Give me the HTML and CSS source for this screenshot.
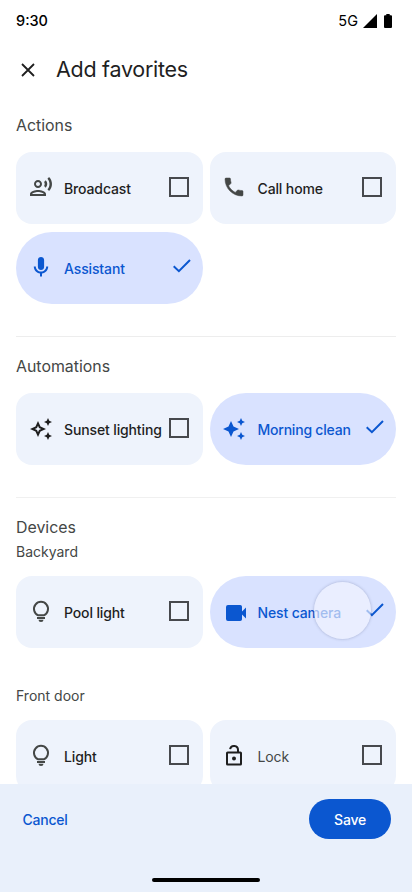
FILE: index.html
```
<!DOCTYPE html>
<html lang="en">
<head>
<meta charset="utf-8">
<title>Add favorites</title>
<link rel="stylesheet" href="styles.css">
</head>
<body>
<svg class="defs" aria-hidden="true">
  <symbol id="voice" viewBox="0 0 24 24"><path d="M9 13c2.21 0 4-1.79 4-4s-1.79-4-4-4-4 1.79-4 4 1.79 4 4 4zm0-6c1.1 0 2 .9 2 2s-.9 2-2 2-2-.9-2-2 .9-2 2-2zm0 8c-2.67 0-8 1.34-8 4v2h16v-2c0-2.66-5.33-4-8-4zm-6 4c.22-.72 3.31-2 6-2 2.7 0 5.8 1.29 6 2H3zM15.08 7.05c.84 1.18.84 2.71 0 3.89l1.68 1.69c2.02-2.02 2.02-5.07 0-7.27l-1.68 1.69zM20.07 2l-1.63 1.63c2.77 3.02 2.77 7.56 0 10.74L20.07 16c3.9-3.89 3.91-9.95 0-14z"/></symbol>
  <symbol id="call" viewBox="0 0 24 24"><path d="M6.62 10.79c1.44 2.83 3.76 5.14 6.59 6.59l2.2-2.2c.27-.27.67-.36 1.02-.24 1.12.37 2.33.57 3.57.57.55 0 1 .45 1 1V20c0 .55-.45 1-1 1-9.39 0-17-7.61-17-17 0-.55.45-1 1-1h3.5c.55 0 1 .45 1 1 0 1.25.2 2.45.57 3.57.11.35.03.74-.25 1.02l-2.2 2.2z" stroke="currentColor" stroke-width=".5"/></symbol>
  <symbol id="mic" viewBox="0 0 24 24"><path d="M12 15c1.76 0 3.1-1.34 3.1-3.1V5c0-1.76-1.34-3-3.1-3S8.900 3.240 8.900 5v6.900c0 1.760 1.340 3.100 3.100 3.100zM17.200 11.500c0 2.860-2.340 5.100-5.200 5.100s-5.200-2.240-5.200-5.100H4.800c0 3.630 2.710 6.530 6.200 7V21.500h2v-3c3.490-.47 6.200-3.370 6.200-7h-2z"/></symbol>
  <symbol id="sparkle" viewBox="0 0 24 24"><path d="M19 9l1.25-2.75L23 5l-2.75-1.25L19 1l-1.25 2.75L15 5l2.75 1.25L19 9zM19 15l-1.25 2.75L15 19l2.75 1.25L19 23l1.25-2.75L23 19l-2.75-1.25L19 15zM11.5 9.5L9 4 6.5 9.5 1 12l5.5 2.5L9 20l2.5-5.5L17 12l-5.5-2.5z"/></symbol>
  <symbol id="sparkle-outline" viewBox="0 0 24 24"><path fill-rule="evenodd" d="M19 9l1.25-2.75L23 5l-2.75-1.25L19 1l-1.25 2.75L15 5l2.75 1.25L19 9zM19 15l-1.25 2.75L15 19l2.75 1.25L19 23l1.25-2.75L23 19l-2.75-1.25L19 15zM11.5 9.500L9 4 6.500 9.500 1 12l5.500 2.500L9 20l2.500-5.500L17 12l-5.500-2.500zM9.990 12.990L9 15.170l-.990-2.180L5.830 12l2.180-.990L9 8.830l.990 2.180L12.170 12l-2.180.990z"/></symbol>
  <symbol id="bulb" viewBox="0 0 24 24"><path fill="none" stroke="currentColor" stroke-width="2" d="M9.300 16.300a7 7 0 1 1 5.400 0zM8 19h8"/><path d="M9.500 20.800h5a2.500 2.200 0 0 1-5 0z"/></symbol>
  <symbol id="camera" viewBox="0 0 24 24"><path d="M4 4h12.200a1.800 1.800 0 0 1 1.800 1.800v4.700l4-4v11l-4-4v4.700a1.800 1.800 0 0 1-1.800 1.800H4a2 2 0 0 1-2-2V6a2 2 0 0 1 2-2z"/></symbol>
  <symbol id="lock" viewBox="0 0 24 24"><path fill="none" stroke="currentColor" stroke-width="2" d="M8.100 6.100a4 4 0 0 1 7.900 1v2.400M5.600 9.500h12.800a.6.6 0 0 1 .6.6v10.800a.6.6 0 0 1-.6.6H5.600a.6.6 0 0 1-.6-.6V10.100a.6.6 0 0 1 .6-.6z"/><circle cx="12" cy="15.500" r="2"/></symbol>
  <symbol id="check" viewBox="0 0 20 16"><path fill="none" stroke="currentColor" stroke-width="2" d="M1.700 8.200l5.200 5L18 2"/></symbol>
</svg>
<div class="screen">
  <header class="status">
    <span class="clock">9:30</span>
    <span class="network">5G</span>
    <svg class="signal" viewBox="0 0 14 14"><path d="M14 0v14H0z"/></svg>
    <svg class="battery" viewBox="0 0 8 14"><path d="M2.300 0h3.400v1.200H7a1 1 0 0 1 1 1V13a1 1 0 0 1-1 1H1a1 1 0 0 1-1-1V2.200a1 1 0 0 1 1-1h1.300z"/></svg>
  </header>
  <div class="title-bar">
    <svg class="close" viewBox="0 0 14 14"><path d="M1 1l12 12M13 1L1 13"/></svg>
    <h1>Add favorites</h1>
  </div>
  <main class="content">
    <section class="actions">
      <h2>Actions</h2>
      <div class="grid">
        <div class="card"><svg class="icon"><use href="#voice"/></svg><span class="label">Broadcast</span><i class="box"></i></div>
        <div class="card right"><svg class="icon"><use href="#call"/></svg><span class="label">Call home</span><i class="box"></i></div>
        <div class="card on"><svg class="icon"><use href="#mic"/></svg><span class="label">Assistant</span><svg class="tick"><use href="#check"/></svg></div>
      </div>
    </section>
    <section class="automations">
      <h2>Automations</h2>
      <div class="grid">
        <div class="card"><svg class="icon dark lower"><use href="#sparkle-outline"/></svg><span class="label">Sunset lighting</span><i class="box"></i></div>
        <div class="card on right"><svg class="icon lower"><use href="#sparkle"/></svg><span class="label tight">Morning clean</span><svg class="tick"><use href="#check"/></svg></div>
      </div>
    </section>
    <section class="devices">
      <h2>Devices</h2>
      <h3 class="backyard">Backyard</h3>
      <div class="grid">
        <div class="card"><svg class="icon"><use href="#bulb"/></svg><span class="label">Pool light</span><i class="box"></i></div>
        <div class="card on right"><svg class="icon camera"><use href="#camera"/></svg><span class="label">Nest camera</span><svg class="tick"><use href="#check"/></svg><i class="touch"></i></div>
      </div>
      <h3 class="front">Front door</h3>
      <div class="grid">
        <div class="card"><svg class="icon"><use href="#bulb"/></svg><span class="label">Light</span><i class="box"></i></div>
        <div class="card right"><svg class="icon dark"><use href="#lock"/></svg><span class="label muted">Lock</span><i class="box"></i></div>
      </div>
    </section>
  </main>
  <footer class="footer">
    <div class="buttons">
      <button class="cancel">Cancel</button>
      <button class="save">Save</button>
    </div>
    <div class="home-bar"></div>
  </footer>
</div>
</body>
</html>
```
FILE: styles.css
```
* { box-sizing: border-box; }
body { margin: 0; background: #fff; font-family: Inter, Roboto, sans-serif; color: #1f1f1f; }
h1, h2, h3 { margin: 0; font-weight: 400; white-space: nowrap; }
svg { fill: currentColor; flex: none; display: block; }
button { border: 0; background: none; padding: 0; font: inherit; letter-spacing: inherit; }
.defs { position: absolute; width: 0; height: 0; }
.screen { width: 412px; height: 892px; display: flex; flex-direction: column; overflow: hidden; }
.status { height: 42px; flex: none; padding: 0 20px 0 16px; display: flex; align-items: center; color: #000; font-size: 14.5px; font-weight: 500; }
.clock { flex: 1; padding-bottom: 1px; }
.network { font-size: 14.5px; font-weight: 400; margin-right: 5px; padding-bottom: 1px; }
.signal { width: 14px; height: 14px; margin-right: 7px; }
.battery { width: 8px; height: 14px; }
.title-bar { height: 56px; flex: none; display: flex; align-items: center; padding-left: 21px; gap: 21px; }
.close { width: 14px; height: 14px; fill: none; stroke: #1f1f1f; stroke-width: 1.8; }
h1 { font-size: 21.5px; line-height: 28px; letter-spacing: -.28px; padding-bottom: 2px; }
.content { flex: 1; min-height: 0; overflow: hidden; padding: 0 16px; }
h2 { font-size: 15.9px; line-height: 22px; padding: 1px 0; color: #444746; }
h3 { font-size: 14px; line-height: 20px; color: #444746; }
.grid { display: grid; grid-template-columns: 186.5px 186px; gap: 8px 7.5px; }
.actions { height: 239px; padding-top: 16px; border-bottom: 1px solid #ededed; }
.actions .grid { margin-top: 14px; }
.automations { height: 161px; padding-top: 18px; border-bottom: 1px solid #f0f0f0; }
.automations .grid { margin-top: 14px; }
.devices { padding-top: 18px; }
.backyard { margin: 2px 0 14px; }
.front { margin: 38px 0 14px; }
.card { height: 72px; border-radius: 16px; background: #eef3fc; display: flex; align-items: center; padding: 0 14px 2px 12.5px; position: relative; color: #444746; }
.icon { width: 24px; height: 24px; margin-right: 11.5px; }
.right { padding-left: 12px; }
.lower { margin-top: 2px; }
.right .camera { margin: 4px 9.5px 0 2px; }
.dark { color: #1f1f1f; }
.label { flex: 1; font-size: 14px; font-weight: 500; letter-spacing: -.13px; line-height: 20px; color: #1f1f1f; white-space: nowrap; padding-top: 3px; }
.tight { letter-spacing: -.22px; }
.muted { font-weight: 400; color: #444746; }
.box { width: 20px; height: 20px; border: 2px solid #47494d; flex: none; }
.on { border-radius: 36px; background: #d9e2ff; color: #0b57d0; padding-right: 11px; }
.on .label { color: #0b57d0; }
.tick { width: 20px; height: 16px; margin-bottom: 3px; }
.touch { position: absolute; left: 104px; top: 5.5px; width: 57px; height: 57px; border-radius: 50%; background: rgba(242, 244, 255, .65); box-shadow: 0 0 3px rgba(60, 70, 110, .35); }
.footer { height: 108px; flex: none; background: #e9f0fb; padding-top: 15px; }
.buttons { display: flex; align-items: center; justify-content: space-between; padding: 0 21px 0 22.5px; font-size: 14px; font-weight: 500; letter-spacing: -.25px; }
.cancel { color: #0b57d0; }
.save { width: 82px; height: 40px; border-radius: 20px; background: #0b57d0; color: #fff; }
.home-bar { width: 108px; height: 4px; border-radius: 2px; background: #000; margin: 39px auto 0; }
```
